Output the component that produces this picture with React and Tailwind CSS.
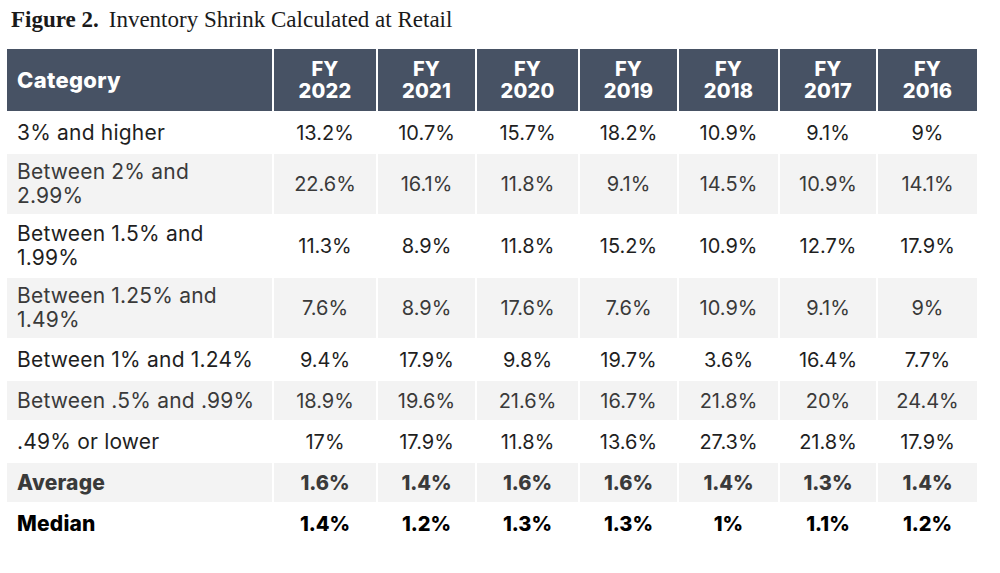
const years = ["2022", "2021", "2020", "2019", "2018", "2017", "2016"];

const rows = [
  { label: ["3% and higher"], values: ["13.2%", "10.7%", "15.7%", "18.2%", "10.9%", "9.1%", "9%"] },
  { label: ["Between 2% and", "2.99%"], values: ["22.6%", "16.1%", "11.8%", "9.1%", "14.5%", "10.9%", "14.1%"] },
  { label: ["Between 1.5% and", "1.99%"], values: ["11.3%", "8.9%", "11.8%", "15.2%", "10.9%", "12.7%", "17.9%"] },
  { label: ["Between 1.25% and", "1.49%"], values: ["7.6%", "8.9%", "17.6%", "7.6%", "10.9%", "9.1%", "9%"] },
  { label: ["Between 1% and 1.24%"], values: ["9.4%", "17.9%", "9.8%", "19.7%", "3.6%", "16.4%", "7.7%"] },
  { label: ["Between .5% and .99%"], values: ["18.9%", "19.6%", "21.6%", "16.7%", "21.8%", "20%", "24.4%"] },
  { label: [".49% or lower"], values: ["17%", "17.9%", "11.8%", "13.6%", "27.3%", "21.8%", "17.9%"] },
  { label: ["Average"], values: ["1.6%", "1.4%", "1.6%", "1.6%", "1.4%", "1.3%", "1.4%"], bold: true },
  { label: ["Median"], values: ["1.4%", "1.2%", "1.3%", "1.3%", "1%", "1.1%", "1.2%"], bold: true },
];

const sans = "font-['Inter','Open_Sans',sans-serif]";

export default function App() {
  return (
    <div className="w-[1000px] h-[573px] bg-white pt-[5px] pl-[7px]">
      <h1 className="font-['Liberation_Serif',serif] text-[23px] leading-[30px] text-[#1a1a1a] pl-[4px]">
        <span className="font-bold">Figure 2.</span>
        <span className="ml-[10px]">Inventory Shrink Calculated at Retail</span>
      </h1>

      <div
        className={`mt-[14px] grid grid-cols-[265px_102px_97px_101px_97px_99px_96px_99px] gap-x-[2px] gap-y-[2px] w-[970px] ${sans}`}
      >
        {/* header */}
        <div className="h-[62px] bg-[#475264] flex items-center pl-[10px] text-white text-[22px] tracking-[0.3px] font-extrabold">
          Category
        </div>
        {years.map((y) => (
          <div
            key={y}
            className="h-[62px] bg-[#475264] flex flex-col items-center justify-center text-white text-[20px] tracking-[0.2px] font-extrabold leading-[22px]"
          >
            <span>FY</span>
            <span>{y}</span>
          </div>
        ))}

        {rows.map((row, i) => {
          const shaded = i % 2 === 1;
          const bg = shaded ? "bg-[#f3f3f3]" : "bg-white";
          const h = row.label.length > 1 ? "h-[60px]" : "h-[39px]";
          const name = row.label.join(" ");
          const color = name === "Median" ? "text-black" : shaded ? "text-[#3a3a3a]" : "text-[#1f1f1f]";
          const weight = row.bold ? "font-extrabold" : "font-normal";
          return [
            <div
              key={name}
              className={`${h} ${bg} ${color} ${weight} flex flex-col justify-center pl-[10px] text-[21px] tracking-[0.2px] leading-[24px] whitespace-nowrap`}
            >
              {row.label.map((line) => (
                <span key={line}>{line}</span>
              ))}
            </div>,
            ...row.values.map((v, j) => (
              <div
                key={name + j}
                className={`${h} ${bg} ${color} ${weight} flex items-center justify-center text-[20px]`}
              >
                {v}
              </div>
            )),
          ];
        })}
      </div>
    </div>
  );
}
